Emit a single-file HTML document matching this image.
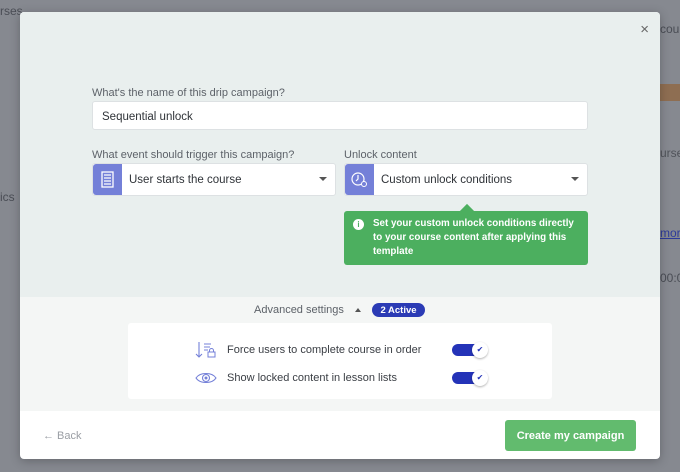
<!DOCTYPE html>
<html><head><style>
*{box-sizing:border-box;margin:0;padding:0}
body{width:680px;height:472px;overflow:hidden;background:#868990;font-family:"Liberation Sans",sans-serif;position:relative}
.bg{position:absolute;color:#4a4d55;font-size:12px}
.modal{position:absolute;left:20px;top:12px;width:640px;height:447px;border-radius:4px;overflow:hidden;background:#fff;box-shadow:0 2px 10px rgba(0,0,0,.25)}
.top{position:absolute;left:0;top:0;width:640px;height:285px;background:#e9efee}
.adv{position:absolute;left:0;top:285px;width:640px;height:114px;background:#f4f6f5}
.lbl{position:absolute;font-size:11px;color:#5d6269}
.inp{position:absolute;background:#fff;border:1px solid #dde1e3;border-radius:3px;font-size:11.5px;color:#2f3338}
.ico{position:absolute;left:0;top:0;width:29px;height:100%;background:#7480d8;border-radius:3px 0 0 3px}
.caret{position:absolute;right:8px;top:13px;width:0;height:0;border-left:4px solid transparent;border-right:4px solid transparent;border-top:4px solid #555}
.tog{position:absolute;width:36px;height:16px}
.tog .t{position:absolute;left:0;top:2px;width:30px;height:12px;border-radius:6px;background:#2433b8}
.tog .k{position:absolute;right:0;top:0;width:16px;height:16px;border-radius:50%;background:#fff;box-shadow:0 1px 2px rgba(0,0,0,.3);color:#2433b8;font-size:8px;text-align:center;line-height:16px}
</style></head><body>
<div class="bg" style="left:0;top:4px">rses</div>
<div class="bg" style="left:0;top:190px">ics</div>
<div class="bg" style="left:660px;top:22px">cou</div>
<div style="position:absolute;left:660px;top:84px;width:20px;height:17px;background:#8e6e52"></div>
<div class="bg" style="left:660px;top:146px;color:#50535a">urse</div>
<div class="bg" style="left:660px;top:226px;color:#2d3a9a;text-decoration:underline">more</div>
<div class="bg" style="left:660px;top:271px">00:0</div>
<div class="modal">
<div class="top"></div>
<div style="position:absolute;right:11px;top:9px;font-size:15px;color:#666">×</div>
<div class="lbl" style="left:72px;top:75px">What's the name of this drip campaign?</div>
<div class="inp" style="left:72px;top:89px;width:496px;height:29px;padding:9px 9px">Sequential unlock</div>
<div class="lbl" style="left:72px;top:137px">What event should trigger this campaign?</div>
<div class="lbl" style="left:324px;top:137px">Unlock content</div>
<div class="inp" style="left:72px;top:151px;width:244px;height:33px;padding:10px 0 0 36px"><div class="ico"><svg width="29" height="31" viewBox="0 0 29 31"><rect x="9" y="8" width="11" height="15" fill="none" stroke="#fff" stroke-width="1.3"/><path d="M11 11h7M11 14h7M11 17h7M11 20h7" stroke="#fff" stroke-width="1.2"/></svg></div>User starts the course<div class="caret"></div></div>
<div class="inp" style="left:324px;top:151px;width:244px;height:33px;padding:10px 0 0 36px"><div class="ico"><svg width="29" height="31" viewBox="0 0 29 31"><circle cx="13" cy="15" r="6" fill="none" stroke="#fff" stroke-width="1.2"/><path d="M13 11v4l-2 2" stroke="#fff" stroke-width="1.2" fill="none"/><circle cx="19" cy="20" r="2.5" fill="#7480d8" stroke="#fff" stroke-width="1"/></svg></div>Custom unlock conditions<div class="caret"></div></div>
<div style="position:absolute;left:324px;top:199px;width:244px;height:54px;background:#4caf5f;border-radius:3px;color:#fff;font-size:9.8px;font-weight:bold;line-height:14px;padding:6px 0 0 29px;white-space:nowrap">
<div style="position:absolute;left:118px;top:-5px;width:10px;height:10px;background:#4caf5f;transform:rotate(45deg)"></div>
<div style="position:absolute;left:9px;top:8px;width:11px;height:11px;border-radius:50%;background:#fff;color:#4caf5f;font-size:8px;text-align:center;line-height:11px">i</div>
<span style="position:relative">Set your custom unlock conditions directly<br>to your course content after applying this<br>template</span></div>
<div class="adv"></div>
<div style="position:absolute;left:234px;top:292px;font-size:11px;color:#5d6269">Advanced settings</div>
<div style="position:absolute;left:335px;top:296px;width:0;height:0;border-left:3.5px solid transparent;border-right:3.5px solid transparent;border-bottom:4px solid #555"></div>
<div style="position:absolute;left:352px;top:291px;width:53px;height:14px;border-radius:7px;background:#2b3bb5;color:#fff;font-size:9.5px;font-weight:bold;text-align:center;line-height:15px">2 Active</div>
<div style="position:absolute;left:108px;top:311px;width:424px;height:76px;background:#fff;border-radius:3px"></div>
<svg style="position:absolute;left:175px;top:329px" width="22" height="18" viewBox="0 0 22 18"><path d="M4 1v15M1 13l3 3 3-3" stroke="#7480d8" fill="none" stroke-width="1.1"/><path d="M9 3h7M9 6h6M9 9h4" stroke="#7480d8" stroke-width="1.1"/><rect x="13" y="11" width="7" height="5" fill="none" stroke="#7480d8"/><path d="M14.5 11V9.5a2 2 0 0 1 4 0V11" stroke="#7480d8" fill="none"/></svg>
<div style="position:absolute;left:207px;top:332px;font-size:11px;color:#3a3e44">Force users to complete course in order</div>
<div class="tog" style="left:432px;top:330px"><div class="t"></div><div class="k">✔</div></div>
<svg style="position:absolute;left:175px;top:359px" width="22" height="14" viewBox="0 0 22 14"><path d="M1 7C5 1 17 1 21 7C17 13 5 13 1 7Z" fill="none" stroke="#7480d8" stroke-width="1.1"/><circle cx="11" cy="7" r="3.5" fill="none" stroke="#7480d8" stroke-width="1.1"/><circle cx="11" cy="7" r="1.5" fill="#7480d8"/></svg>
<div style="position:absolute;left:207px;top:360px;font-size:11px;color:#3a3e44">Show locked content in lesson lists</div>
<div class="tog" style="left:432px;top:358px"><div class="t"></div><div class="k">✔</div></div>
<div style="position:absolute;left:23px;top:418px;font-size:11px;color:#9a9ea4">← Back</div>
<div style="position:absolute;left:485px;top:408px;width:131px;height:31px;background:#62bb6e;border-radius:3px;color:#fff;font-size:11px;font-weight:bold;text-align:center;line-height:32px">Create my campaign</div>
</div>
</body></html>
